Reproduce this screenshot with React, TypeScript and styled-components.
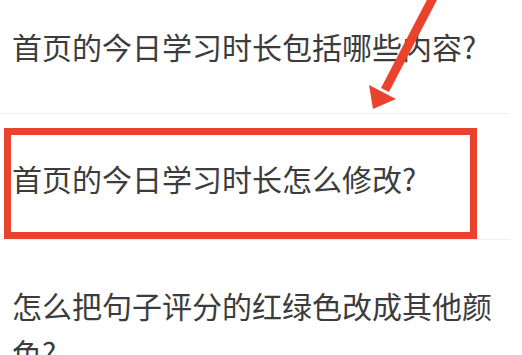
import styled, { createGlobalStyle } from 'styled-components'

const GlobalStyle = createGlobalStyle`
  html, body {
    margin: 0;
    padding: 0;
    background: #ffffff;
  }
  body {
    font-family: 'Noto Sans CJK SC', 'Noto Sans', sans-serif;
    width: 522px;
    height: 355px;
    overflow: hidden;
  }
`

const RED = '#e9432e'

const questions = [
  { text: '首页的今日学习时长包括哪些内容?', marked: false },
  { text: '首页的今日学习时长怎么修改?', marked: true },
  { text: '怎么把句子评分的红绿色改成其他颜色?', marked: false },
]

const Page = styled.div`
  position: relative;
  width: 522px;
  height: 355px;
  overflow: hidden;
`

const List = styled.ul`
  list-style: none;
  margin: 0;
  padding: 0;
  width: 510px;
`

const Item = styled.li<{ $marked: boolean }>`
  padding: ${(p) => (p.$marked ? '14px 0 0 0' : '23px 0 43px 0')};
  border-bottom: 1px solid #f0f0f0;

  &:last-child {
    padding-top: 42px;
    border-bottom: none;
  }
`

const Marker = styled.div`
  width: 473px;
  margin-left: 4px;
  box-sizing: border-box;
  border: 7px solid ${RED};
  padding: 20px 0 30px 1px;
`

const Question = styled.p`
  margin: 0;
  padding-left: 12px;
  padding-right: 8px;
  font-size: 30px;
  line-height: 47px;
  color: #3c3c3c;
`

const MarkedQuestion = styled(Question)`
  padding-left: 0;
`

const Arrow = styled.svg`
  position: absolute;
  left: 0;
  top: 0;
  pointer-events: none;
`

const App = () => {
  return (
    <Page>
      <GlobalStyle />
      <List>
        {questions.map((q) => (
          <Item key={q.text} $marked={q.marked}>
            {q.marked ? (
              <Marker>
                <MarkedQuestion>{q.text}</MarkedQuestion>
              </Marker>
            ) : (
              <Question>{q.text}</Question>
            )}
          </Item>
        ))}
      </List>
      <Arrow width="522" height="130" viewBox="0 0 522 130">
        <line
          x1="434"
          y1="-4"
          x2="385"
          y2="90"
          stroke={RED}
          strokeWidth="9"
        />
        <polygon points="373,109 369,85 396,99" fill={RED} />
      </Arrow>
    </Page>
  )
}

export default App
